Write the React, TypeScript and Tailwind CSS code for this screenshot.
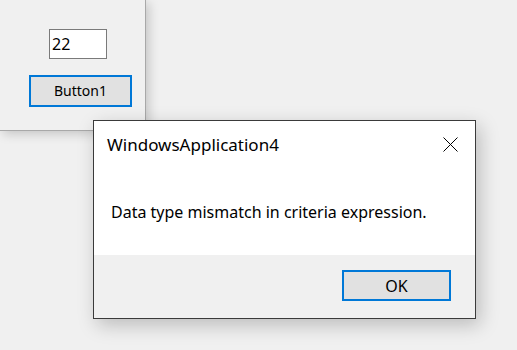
export default function App() {
  const font = { fontFamily: '"Noto Sans", "Open Sans", sans-serif' };
  return (
    <div className="relative h-[350px] w-[517px] overflow-hidden bg-[#f0f0f0] text-black" style={font}>
      {/* form behind the message box */}
      <div className="flex h-[131px] w-[146px] flex-col items-start border-r border-b border-[#a8a8a8] bg-[#f0f0f0] shadow-[3px_3px_10px_rgba(0,0,0,0.18)]">
        <div className="ml-[49px] mt-[29px] flex h-[30px] w-[58px] items-center border border-[#7a7a7a] bg-white pl-[2px] text-[16px] leading-none">
          22
        </div>
        <button className="ml-[29px] mt-[16px] flex h-[32px] w-[103px] items-center justify-center border-2 border-[#0078d7] bg-[#e1e1e1] text-[14px] leading-none">
          Button1
        </button>
      </div>

      {/* message box */}
      <div className="absolute left-[93px] top-[120px] flex h-[199px] w-[383px] flex-col border border-[#3a3a3a] bg-white shadow-[4px_6px_18px_rgba(0,0,0,0.22)]">
        <div className="flex h-[46px] items-center justify-between pl-[13px] pr-[17px]">
          <span className="text-[17px] leading-none">WindowsApplication4</span>
          <svg width="15" height="15" viewBox="0 0 15 15" fill="none" stroke="#000" strokeWidth="1">
            <path d="M0.5 0.5 L14.5 14.5 M14.5 0.5 L0.5 14.5" />
          </svg>
        </div>
        <div className="flex flex-1 items-center pl-[17px] pt-[1px]">
          <span className="text-[16px] leading-none">Data type mismatch in criteria expression.</span>
        </div>
        <div className="flex h-[63px] items-start justify-end bg-[#f0f0f0] pr-[24px] pt-[15px]">
          <button className="flex h-[31px] w-[109px] items-center justify-center border-2 border-[#0078d7] bg-[#e1e1e1] text-[16px] leading-none">
            OK
          </button>
        </div>
      </div>
    </div>
  );
}
